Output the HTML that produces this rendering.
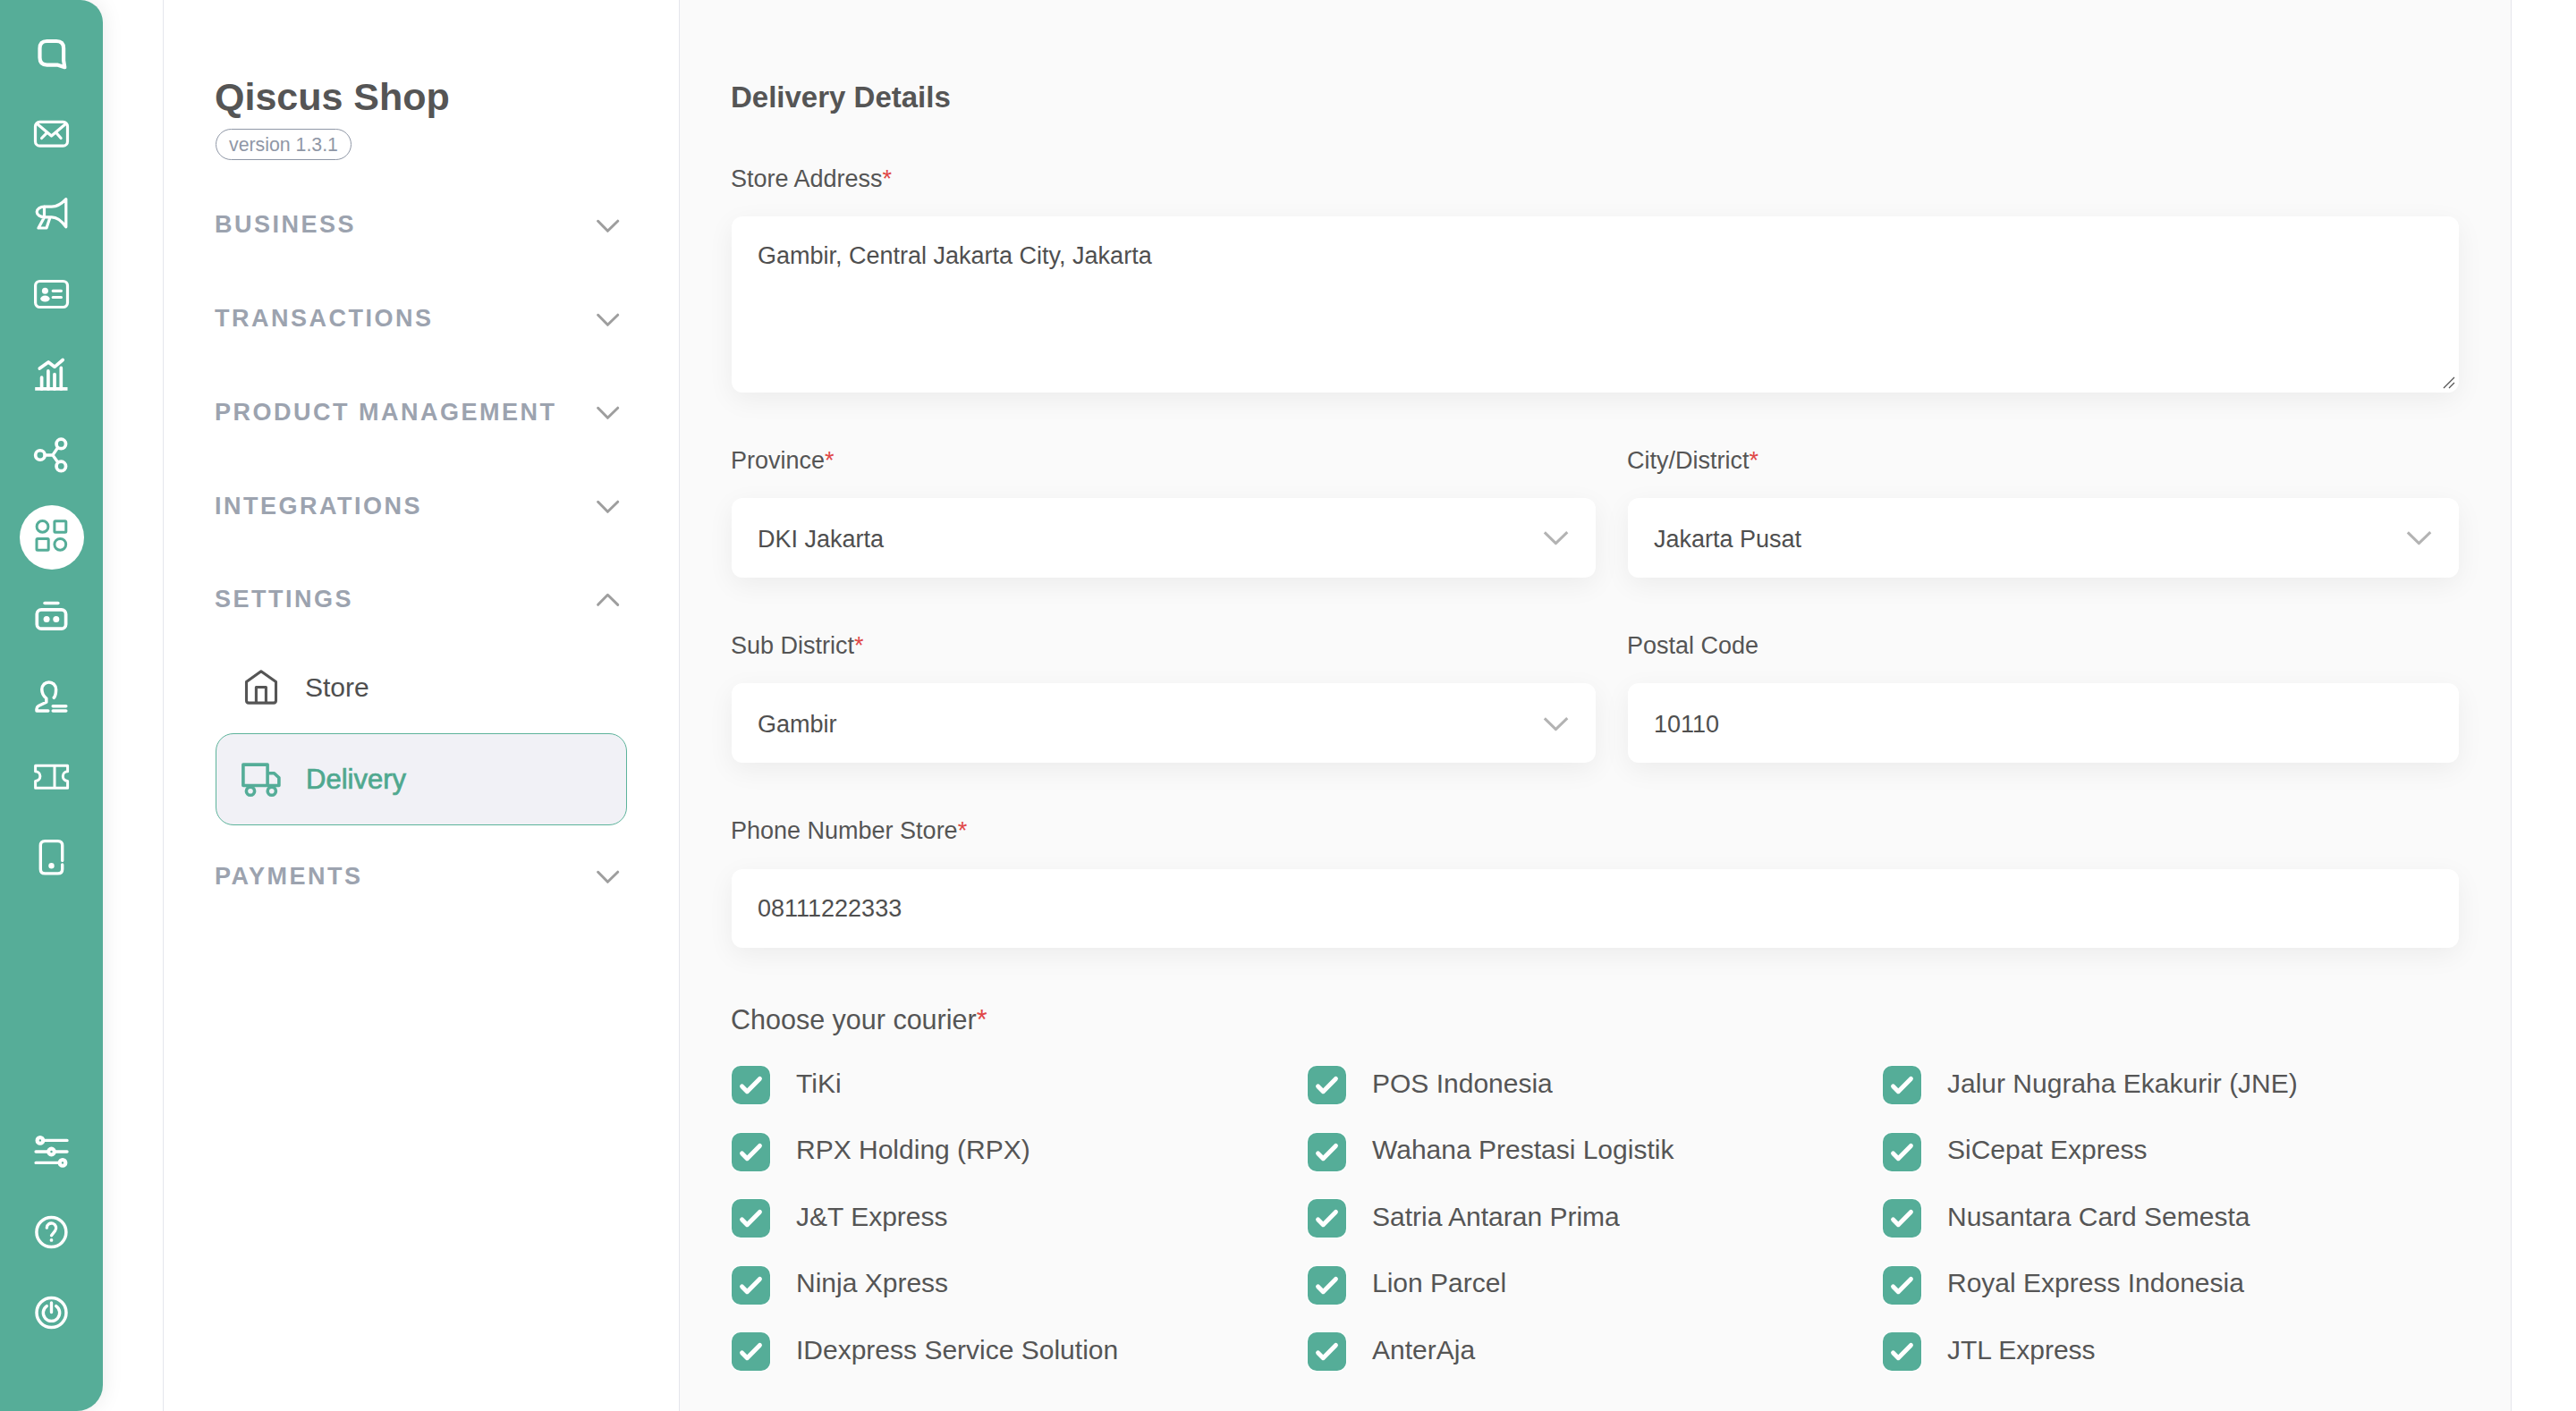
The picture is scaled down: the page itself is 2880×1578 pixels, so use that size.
<!DOCTYPE html>
<html><head><meta charset="utf-8">
<style>
*{box-sizing:border-box;margin:0;padding:0}
html,body{width:2880px;height:1578px;overflow:hidden;background:#fff;font-family:"Liberation Sans",sans-serif;color:#555}
.abs{position:absolute}
.t{position:absolute;white-space:pre;line-height:1}
#rail{position:absolute;left:0;top:0;width:115px;height:1578px;background:#56ad98;border-radius:0 25px 29px 0;box-shadow:0 0 24px rgba(0,0,0,0.085)}
.ic{position:absolute;left:33px;width:50px;height:50px;overflow:visible}
.ic *{fill:none;stroke:#fff;stroke-linecap:round;stroke-linejoin:round}
#nav{position:absolute;left:182px;top:0;width:578px;height:1578px;background:#fff;border-left:1px solid #e5e6ec;border-right:1px solid #e5e6ec}
#main{position:absolute;left:760px;top:0;width:2048px;height:1578px;background:#fafafa;border-right:1px solid #e5e6ec}
.hdr{font-weight:700;font-size:27px;letter-spacing:2.5px;color:#9ca3af}
.chev{position:absolute;left:655px;width:50px;height:35px;overflow:visible}
.chev path{fill:none;stroke:#9e9e9e;stroke-width:3;stroke-linecap:round;stroke-linejoin:round}
.lbl{font-size:27px;color:#555}
.req{color:#e04848}
.box{position:absolute;background:#fff;border-radius:12px;box-shadow:0 8px 30px rgba(0,0,0,0.06)}
.val{font-size:27px;color:#4f4f4f}
.sch{position:absolute;width:50px;height:35px;overflow:visible}
.sch path{fill:none;stroke:#b3b3b3;stroke-width:3;stroke-linecap:square;stroke-linejoin:round}
.cb{position:absolute;width:43px;height:43px;border-radius:10px;background:#55ad98;box-shadow:0 0 0 1px #fff}
.cb svg{position:absolute;left:0;top:0;width:43px;height:43px}
.cb path{fill:none;stroke:#fff;stroke-width:5;stroke-linecap:round;stroke-linejoin:round}
.ci{font-size:30px;color:#555}
@media (max-width:1500px){html{zoom:0.5}}
</style></head><body>
<div id="rail"></div>
<!-- rail icons -->
<svg class="ic" style="top:35px" viewBox="0 0 50 50"><path stroke-width="4.2" d="M19.5 11H30Q38.1 11 38.1 19V32.5L39.3 40.2L31 37.6H19.5Q11.5 37.6 11.5 29.6V19Q11.5 11 19.5 11Z"/></svg>
<svg class="ic" style="top:124px" viewBox="0 0 50 50"><rect x="6.5" y="12.4" width="36" height="26.8" rx="5" stroke-width="3.2"/><path stroke-width="3.2" d="M8.5 14.5L24.5 28L40.5 14.5M13.6 30.5L19.1 24.8M35.1 30.5L30.1 24.8"/></svg>
<svg class="ic" style="top:213px" viewBox="0 0 50 50"><path stroke-width="3.2" d="M16.7 18.1H24.8Q33 18.1 40.8 9.6V40.8Q33 29.8 24.8 29.8H16.7A8.5 5.85 0 0 1 16.7 18.1ZM16.5 18.1V29.8M16.5 30L10 42H19L23 30"/></svg>
<svg class="ic" style="top:304px" viewBox="0 0 50 50"><rect x="6.6" y="10.5" width="35.9" height="29" rx="5" stroke-width="3.2"/><circle cx="17.4" cy="21.3" r="3.5" fill="#fff" stroke="none" style="fill:#fff;stroke:none"/><ellipse cx="17.4" cy="30.1" rx="5.3" ry="3.5" style="fill:#fff;stroke:none"/><path stroke-width="3.2" d="M26.2 21.3H35.4M26.2 28.5H35.4"/></svg>
<svg class="ic" style="top:394px" viewBox="0 0 50 50"><path stroke-width="3.8" style="stroke-linecap:butt" d="M6.2 40.9H42.5"/><path stroke-width="3.7" d="M13.6 40.9V28M20.9 40.9V20.9M28 40.9V24.5M35.3 40.9V17.4M11.3 18.1L21.1 11L28 16.3L37.2 8.5"/></svg>
<svg class="ic" style="top:484px" viewBox="0 0 50 50"><circle cx="11.9" cy="25" r="5.25" stroke-width="3.7"/><circle cx="35.3" cy="12.4" r="5.25" stroke-width="3.7"/><circle cx="35.3" cy="37.4" r="5.25" stroke-width="3.7"/><path stroke-width="3.3" d="M17.2 25H25.9L31.2 17.3M25.9 25L31.2 32.3"/></svg>
<div class="abs" style="left:22px;top:565px;width:72px;height:72px;border-radius:50%;background:#fff"></div>
<svg class="abs" style="left:18px;top:560px;width:80px;height:80px" viewBox="0 0 80 80"><g fill="none" stroke="#55ad98" stroke-width="3"><circle cx="29.5" cy="28.9" r="6.4"/><rect x="42.9" y="22.8" width="12.9" height="12.5" rx="1"/><rect x="23" y="42.6" width="13.2" height="12.6" rx="1"/><circle cx="49.3" cy="48.8" r="6.4"/></g></svg>
<svg class="ic" style="top:664px" viewBox="0 0 50 50"><path stroke-width="3.5" d="M17 10.6H31.9"/><rect x="8.3" y="17.8" width="32.3" height="21.4" rx="5" stroke-width="3.7"/><circle cx="19.1" cy="28.5" r="3.5" style="fill:#fff;stroke:none"/><circle cx="29.8" cy="28.5" r="3.5" style="fill:#fff;stroke:none"/></svg>
<svg class="ic" style="top:754px" viewBox="0 0 50 50"><path stroke-width="3.5" d="M27.3 26.3C29 24.5 29.6 21 29.6 17C29.6 12.3 26 9 21.7 9C17.4 9 13.8 12.3 13.8 17C13.8 21 15 24 18.8 27V31.2L10 35.5Q8 36.7 8 39V41H20.8M26.2 35.8H40.8M26.2 41.1H40.8"/></svg>
<svg class="ic" style="top:844px" viewBox="0 0 50 50"><path stroke-width="3" d="M6.6 12.3H42.6V18.8A5.3 5.3 0 0 0 42.6 29.4V37.3H6.6V29.4A5.3 5.3 0 0 0 6.6 18.8ZM28 12.3V37.3"/></svg>
<svg class="ic" style="top:933px" viewBox="0 0 50 50"><path stroke-width="3.4" d="M36.7 29.4V12.6Q36.7 7.6 31.7 7.6H17.3Q12.3 7.6 12.3 12.6V38.9Q12.3 43.9 17.3 43.9H31.7Q36.7 43.9 36.7 38.9V34"/><circle cx="24.5" cy="35.3" r="3.2" style="fill:#fff;stroke:none"/></svg>
<svg class="ic" style="top:1263px" viewBox="0 0 50 50"><path stroke-width="3.4" d="M15.5 12.4H42M7.1 25H20.9M28.1 25H42M7.1 37.4H33.4"/><circle cx="11.9" cy="12.4" r="3.3" stroke-width="4.2"/><circle cx="24.5" cy="25" r="3.3" stroke-width="4.2"/><circle cx="37" cy="37.4" r="3.3" stroke-width="4.2"/></svg>
<svg class="ic" style="top:1353px" viewBox="0 0 50 50"><circle cx="24.4" cy="25" r="16.5" stroke-width="3.5"/><path stroke-width="3.3" d="M19.3 20.2A5.2 5.2 0 1 1 28.6 23.4L24.5 28.8"/><circle cx="24.5" cy="33.9" r="1.9" style="fill:#fff;stroke:none"/></svg>
<svg class="ic" style="top:1443px" viewBox="0 0 50 50"><circle cx="24.5" cy="25" r="16.5" stroke-width="3.5"/><path stroke-width="3.4" d="M19.3 17.6A9.2 9.2 0 1 0 29.7 17.6M24.5 14V24.6"/></svg>

<div id="nav"></div>
<div id="main"></div>

<!-- nav content -->
<div class="t" style="left:240px;top:86.5px;font-size:43px;font-weight:700;color:#555">Qiscus Shop</div>
<div class="abs" style="left:241px;top:144px;width:152px;height:35px;border:1.5px solid #8f97a6;border-radius:18px"></div>
<div class="t" style="left:256px;top:152.4px;font-size:21.3px;color:#8f97a6">version 1.3.1</div>

<div class="t hdr" style="left:240px;top:238px">BUSINESS</div>
<svg class="chev" style="top:235px" viewBox="0 0 50 35"><path d="M13.6 12.3L24.4 23.3L35.7 12.2"/></svg>
<div class="t hdr" style="left:240px;top:342.5px">TRANSACTIONS</div>
<svg class="chev" style="top:339.5px" viewBox="0 0 50 35"><path d="M13.6 12.3L24.4 23.3L35.7 12.2"/></svg>
<div class="t hdr" style="left:240px;top:447.5px">PRODUCT MANAGEMENT</div>
<svg class="chev" style="top:444px" viewBox="0 0 50 35"><path d="M13.6 12.3L24.4 23.3L35.7 12.2"/></svg>
<div class="t hdr" style="left:240px;top:552.5px">INTEGRATIONS</div>
<svg class="chev" style="top:548.5px" viewBox="0 0 50 35"><path d="M13.6 12.3L24.4 23.3L35.7 12.2"/></svg>
<div class="t hdr" style="left:240px;top:656.5px">SETTINGS</div>
<svg class="chev" style="top:652.5px" viewBox="0 0 50 35"><path d="M13.6 23.3L24.4 12.3L35.7 23.4"/></svg>

<svg class="abs" style="left:260px;top:740px;width:70px;height:60px" viewBox="0 0 70 60"><path fill="none" stroke="#555" stroke-width="3.1" stroke-linejoin="round" d="M15.5 43.5V22.5L31.9 10.8L48.5 22.5V43.5Q48.5 46.1 45.9 46.1H18.1Q15.5 46.1 15.5 43.5ZM26.4 46.1V28.5H37.4V46.1"/></svg>
<div class="t" style="left:341px;top:753.5px;font-size:30px;color:#4f4f4f">Store</div>

<div class="abs" style="left:241px;top:820px;width:460px;height:103px;border:1.5px solid #5db39b;border-radius:20px;background:#f1f1f6"></div>
<svg class="abs" style="left:260px;top:840px;width:70px;height:60px" viewBox="0 0 70 60"><g fill="none" stroke="#55ad98" stroke-width="3.6" stroke-linejoin="round"><path d="M11.9 15.1H39.1V38.5H11.9Z"/><path d="M39.1 24.7H46.5L51.9 29.8V38.5H39.1"/><circle cx="20" cy="44.7" r="4.6"/><circle cx="43.8" cy="44.7" r="4.6"/></g></svg>
<div class="t" style="left:342px;top:856px;font-size:31px;color:#4fa88f;-webkit-text-stroke:0.7px #4fa88f">Delivery</div>

<div class="t hdr" style="left:240px;top:966.5px">PAYMENTS</div>
<svg class="chev" style="top:962.5px" viewBox="0 0 50 35"><path d="M13.6 12.3L24.4 23.3L35.7 12.2"/></svg>

<!-- main content -->
<div class="t" style="left:817px;top:91.5px;font-size:33px;font-weight:700;color:#555">Delivery Details</div>
<div class="t lbl" style="left:817px;top:186.5px">Store Address<span class="req">*</span></div>
<div class="box" style="left:818px;top:242px;width:1931px;height:197px"></div>
<svg class="abs" style="left:2730px;top:420px;width:16px;height:16px" viewBox="0 0 16 16"><path d="M2 14L14 2M8 14L14 8" stroke="#555" stroke-width="1.3" fill="none"/></svg>
<div class="t val" style="left:847px;top:272.5px">Gambir, Central Jakarta City, Jakarta</div>

<div class="t lbl" style="left:817px;top:501.5px">Province<span class="req">*</span></div>
<div class="t lbl" style="left:1819px;top:501.5px">City/District<span class="req">*</span></div>
<div class="box" style="left:818px;top:557px;width:966px;height:89px"></div>
<div class="box" style="left:1820px;top:557px;width:929px;height:89px"></div>
<div class="t val" style="left:847px;top:589.5px">DKI Jakarta</div>
<div class="t val" style="left:1849px;top:589.5px">Jakarta Pusat</div>
<svg class="sch" style="left:1715px;top:585px" viewBox="0 0 50 35"><path d="M12.9 11.4L24.4 22.6L36.2 11.2"/></svg>
<svg class="sch" style="left:2680px;top:585px" viewBox="0 0 50 35"><path d="M12.9 11.4L24.4 22.6L36.2 11.2"/></svg>

<div class="t lbl" style="left:817px;top:708.5px">Sub District<span class="req">*</span></div>
<div class="t lbl" style="left:1819px;top:708.5px">Postal Code</div>
<div class="box" style="left:818px;top:764px;width:966px;height:89px"></div>
<div class="box" style="left:1820px;top:764px;width:929px;height:89px"></div>
<div class="t val" style="left:847px;top:796.5px">Gambir</div>
<div class="t val" style="left:1849px;top:796.5px">10110</div>
<svg class="sch" style="left:1715px;top:793px" viewBox="0 0 50 35"><path d="M12.9 11.4L24.4 22.6L36.2 11.2"/></svg>

<div class="t lbl" style="left:817px;top:915.5px">Phone Number Store<span class="req">*</span></div>
<div class="box" style="left:818px;top:972px;width:1931px;height:88px"></div>
<div class="t val" style="left:847px;top:1002.5px">08111222333</div>

<div class="t" style="left:817px;top:1125px;font-size:30.5px;color:#555">Choose your courier<span class="req">*</span></div>
<div class="cb" style="left:818px;top:1192px"><svg viewBox="0 0 43 43"><path d="M11.6 22.9L17.3 28.7L31.4 14.4"/></svg></div>
<div class="t ci" style="left:890px;top:1196.5px">TiKi</div>
<div class="cb" style="left:818px;top:1266.5px"><svg viewBox="0 0 43 43"><path d="M11.6 22.9L17.3 28.7L31.4 14.4"/></svg></div>
<div class="t ci" style="left:890px;top:1271.0px">RPX Holding (RPX)</div>
<div class="cb" style="left:818px;top:1341px"><svg viewBox="0 0 43 43"><path d="M11.6 22.9L17.3 28.7L31.4 14.4"/></svg></div>
<div class="t ci" style="left:890px;top:1345.5px">J&amp;T Express</div>
<div class="cb" style="left:818px;top:1415.5px"><svg viewBox="0 0 43 43"><path d="M11.6 22.9L17.3 28.7L31.4 14.4"/></svg></div>
<div class="t ci" style="left:890px;top:1420.0px">Ninja Xpress</div>
<div class="cb" style="left:818px;top:1490px"><svg viewBox="0 0 43 43"><path d="M11.6 22.9L17.3 28.7L31.4 14.4"/></svg></div>
<div class="t ci" style="left:890px;top:1494.5px">IDexpress Service Solution</div>
<div class="cb" style="left:1462px;top:1192px"><svg viewBox="0 0 43 43"><path d="M11.6 22.9L17.3 28.7L31.4 14.4"/></svg></div>
<div class="t ci" style="left:1534px;top:1196.5px">POS Indonesia</div>
<div class="cb" style="left:1462px;top:1266.5px"><svg viewBox="0 0 43 43"><path d="M11.6 22.9L17.3 28.7L31.4 14.4"/></svg></div>
<div class="t ci" style="left:1534px;top:1271.0px">Wahana Prestasi Logistik</div>
<div class="cb" style="left:1462px;top:1341px"><svg viewBox="0 0 43 43"><path d="M11.6 22.9L17.3 28.7L31.4 14.4"/></svg></div>
<div class="t ci" style="left:1534px;top:1345.5px">Satria Antaran Prima</div>
<div class="cb" style="left:1462px;top:1415.5px"><svg viewBox="0 0 43 43"><path d="M11.6 22.9L17.3 28.7L31.4 14.4"/></svg></div>
<div class="t ci" style="left:1534px;top:1420.0px">Lion Parcel</div>
<div class="cb" style="left:1462px;top:1490px"><svg viewBox="0 0 43 43"><path d="M11.6 22.9L17.3 28.7L31.4 14.4"/></svg></div>
<div class="t ci" style="left:1534px;top:1494.5px">AnterAja</div>
<div class="cb" style="left:2105px;top:1192px"><svg viewBox="0 0 43 43"><path d="M11.6 22.9L17.3 28.7L31.4 14.4"/></svg></div>
<div class="t ci" style="left:2177px;top:1196.5px">Jalur Nugraha Ekakurir (JNE)</div>
<div class="cb" style="left:2105px;top:1266.5px"><svg viewBox="0 0 43 43"><path d="M11.6 22.9L17.3 28.7L31.4 14.4"/></svg></div>
<div class="t ci" style="left:2177px;top:1271.0px">SiCepat Express</div>
<div class="cb" style="left:2105px;top:1341px"><svg viewBox="0 0 43 43"><path d="M11.6 22.9L17.3 28.7L31.4 14.4"/></svg></div>
<div class="t ci" style="left:2177px;top:1345.5px">Nusantara Card Semesta</div>
<div class="cb" style="left:2105px;top:1415.5px"><svg viewBox="0 0 43 43"><path d="M11.6 22.9L17.3 28.7L31.4 14.4"/></svg></div>
<div class="t ci" style="left:2177px;top:1420.0px">Royal Express Indonesia</div>
<div class="cb" style="left:2105px;top:1490px"><svg viewBox="0 0 43 43"><path d="M11.6 22.9L17.3 28.7L31.4 14.4"/></svg></div>
<div class="t ci" style="left:2177px;top:1494.5px">JTL Express</div>
</body></html>
